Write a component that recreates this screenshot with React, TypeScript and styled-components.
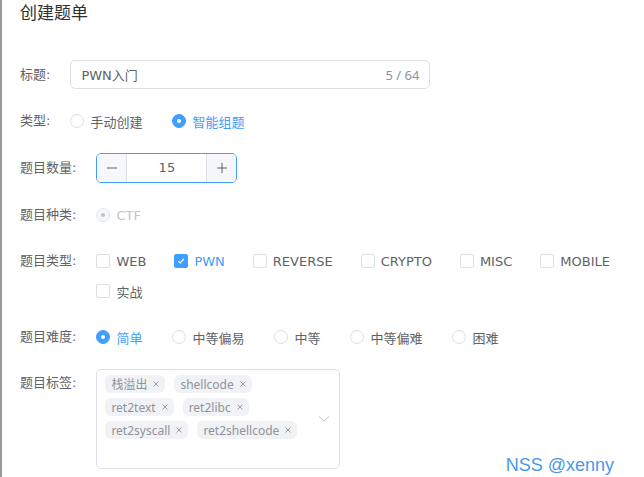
import React from 'react'
import styled, { createGlobalStyle } from 'styled-components'

const blue = '#409eff'
const text = '#606266'
const border = '#dcdfe6'

const GlobalStyle = createGlobalStyle`
  html, body {
    margin: 0;
    padding: 0;
    background: #fff;
  }
  body {
    font-family: "DejaVu Sans", "Noto Sans CJK SC", sans-serif;
  }
  * {
    box-sizing: border-box;
  }
`

const Page = styled.div`
  position: relative;
  width: 644px;
  height: 477px;
  overflow: hidden;
  border-left: 2px solid #9a9a9a;
  padding: 1px 20px 0 18px;
`

const Title = styled.h2`
  margin: 0;
  font-family: "Noto Sans CJK SC", sans-serif;
  font-size: 17px;
  font-weight: 400;
  line-height: 22px;
  color: #303133;
`

const Form = styled.div`
  display: flex;
  flex-direction: column;
  gap: 18px;
  margin-top: 37px;
`

const Item = styled.div<{ $top?: boolean }>`
  display: flex;
  align-items: ${p => (p.$top ? 'flex-start' : 'center')};
`

const Label = styled.label`
  flex: none;
  font-size: 13px;
  line-height: 28px;
  color: ${text};
  padding-right: 20px;
  white-space: nowrap;
`

const Content = styled.div<{ $gap?: number }>`
  flex: 1;
  min-width: 0;
  display: flex;
  flex-wrap: wrap;
  align-items: center;
  row-gap: 2px;
  column-gap: ${p => p.$gap ?? 30}px;
`

/* text input with counter */
const TextInput = styled.div`
  width: 360px;
  height: 29px;
  border: 1px solid ${border};
  border-radius: 5px;
  display: flex;
  align-items: center;
  padding: 0 10px;
  font-size: 13px;
  color: ${text};
`

const InputValue = styled.span`
  flex: 1;
`

const Counter = styled.span`
  font-family: "Noto Sans", sans-serif;
  font-size: 13px;
  color: #909399;
`

/* radio and checkbox share one label style */
const Choice = styled.span<{ $active?: boolean; $disabled?: boolean }>`
  display: inline-flex;
  align-items: center;
  height: 28px;
  font-size: 13px;
  color: ${p => (p.$disabled ? '#c0c4cc' : p.$active ? blue : text)};
`

const RadioDot = styled.span<{ $checked?: boolean; $disabled?: boolean }>`
  position: relative;
  width: 14px;
  height: 14px;
  margin-right: 6px;
  border-radius: 50%;
  border: 1px solid ${p => (p.$disabled ? '#e4e7ed' : p.$checked ? blue : border)};
  background: ${p => (p.$disabled ? '#f5f7fa' : p.$checked ? blue : '#fff')};

  &::after {
    content: '';
    display: ${p => (p.$checked ? 'block' : 'none')};
    position: absolute;
    left: 50%;
    top: 50%;
    width: 4px;
    height: 4px;
    margin: -2px 0 0 -2px;
    border-radius: 50%;
    background: ${p => (p.$disabled ? '#c0c4cc' : '#fff')};
  }
`

const CheckBox = styled.span<{ $checked?: boolean }>`
  display: inline-flex;
  align-items: center;
  justify-content: center;
  width: 14px;
  height: 14px;
  margin-right: 6px;
  border-radius: 2px;
  border: 1px solid ${p => (p.$checked ? blue : border)};
  background: ${p => (p.$checked ? blue : '#fff')};
`

/* number input */
const NumberInput = styled.div`
  display: flex;
  width: 141px;
  height: 30px;
  border: 1px solid ${blue};
  border-radius: 5px;
  overflow: hidden;
`

const StepButton = styled.span<{ $side: 'left' | 'right' }>`
  flex: none;
  width: 30px;
  display: flex;
  align-items: center;
  justify-content: center;
  background: #f5f7fa;
  ${p => (p.$side === 'left' ? `border-right: 1px solid ${border};` : `border-left: 1px solid ${border};`)}
`

const NumberValue = styled.span`
  flex: 1;
  text-align: center;
  line-height: 28px;
  font-size: 13px;
  color: ${text};
`

/* tag select */
const TagSelect = styled.div`
  display: flex;
  width: 244px;
  height: 100px;
  border: 1px solid ${border};
  border-radius: 5px;
`

const TagList = styled.div`
  flex: 1;
  display: flex;
  flex-wrap: wrap;
  align-content: flex-start;
  gap: 5px 9px;
  padding: 5px 0 0 8px;
`

const Tag = styled.span`
  display: inline-flex;
  align-items: center;
  height: 18px;
  padding: 0 6px;
  border-radius: 6px;
  background: #f0f2f5;
  color: #909399;
  font-family: "Noto Sans", "Noto Sans CJK SC", sans-serif;
  font-size: 12px;
`

const TagClose = styled.svg`
  margin-left: 6px;
`

const Arrow = styled.div`
  flex: none;
  width: 30px;
  display: flex;
  align-items: center;
  justify-content: center;
`

const Watermark = styled.div`
  position: absolute;
  right: 30px;
  bottom: 1px;
  font-family: "Liberation Sans", Arial, sans-serif;
  font-size: 18px;
  color: #4a98e8;
`

const Radio: React.FC<{ label: string; checked?: boolean; disabled?: boolean }> = ({ label, checked, disabled }) => (
  <Choice $active={checked} $disabled={disabled}>
    <RadioDot $checked={checked} $disabled={disabled} />
    {label}
  </Choice>
)

const Checkbox: React.FC<{ label: string; checked?: boolean }> = ({ label, checked }) => (
  <Choice $active={checked}>
    <CheckBox $checked={checked}>
      {checked && (
        <svg width="10" height="10" viewBox="0 0 10 10">
          <path d="M2.3 5.2 L4.2 7 L7.8 3" fill="none" stroke="#fff" strokeWidth="1.2" />
        </svg>
      )}
    </CheckBox>
    {label}
  </Choice>
)

const tags = ['栈溢出', 'shellcode', 'ret2text', 'ret2libc', 'ret2syscall', 'ret2shellcode']
const kinds = ['WEB', 'PWN', 'REVERSE', 'CRYPTO', 'MISC', 'MOBILE', '实战']
const levels = ['简单', '中等偏易', '中等', '中等偏难', '困难']

const App: React.FC = () => {
  return (
    <Page>
      <GlobalStyle />
      <Title>创建题单</Title>
      <Form>
        <Item>
          <Label>标题:</Label>
          <Content>
            <TextInput>
              <InputValue>PWN入门</InputValue>
              <Counter>5 / 64</Counter>
            </TextInput>
          </Content>
        </Item>
        <Item>
          <Label>类型:</Label>
          <Content>
            <Radio label="手动创建" />
            <Radio label="智能组题" checked />
          </Content>
        </Item>
        <Item>
          <Label>题目数量:</Label>
          <Content>
            <NumberInput>
              <StepButton $side="left">
                <svg width="12" height="12" viewBox="0 0 12 12">
                  <path d="M1 6 H11" stroke={text} strokeWidth="1" />
                </svg>
              </StepButton>
              <NumberValue>15</NumberValue>
              <StepButton $side="right">
                <svg width="12" height="12" viewBox="0 0 12 12">
                  <path d="M1 6 H11 M6 1 V11" stroke={text} strokeWidth="1" />
                </svg>
              </StepButton>
            </NumberInput>
          </Content>
        </Item>
        <Item>
          <Label>题目种类:</Label>
          <Content>
            <Radio label="CTF" checked disabled />
          </Content>
        </Item>
        <Item $top>
          <Label>题目类型:</Label>
          <Content $gap={28}>
            {kinds.map(k => (
              <Checkbox key={k} label={k} checked={k === 'PWN'} />
            ))}
          </Content>
        </Item>
        <Item>
          <Label>题目难度:</Label>
          <Content>
            {levels.map(l => (
              <Radio key={l} label={l} checked={l === '简单'} />
            ))}
          </Content>
        </Item>
        <Item $top>
          <Label>题目标签:</Label>
          <TagSelect>
            <TagList>
              {tags.map(t => (
                <Tag key={t}>
                  {t}
                  <TagClose width="6" height="6" viewBox="0 0 6 6">
                    <path d="M0.5 0.5 L5.5 5.5 M5.5 0.5 L0.5 5.5" stroke="#909399" strokeWidth="0.9" />
                  </TagClose>
                </Tag>
              ))}
            </TagList>
            <Arrow>
              <svg width="12" height="8" viewBox="0 0 12 8">
                <path d="M1 1.5 L6 6 L11 1.5" fill="none" stroke="#c0c4cc" strokeWidth="1" />
              </svg>
            </Arrow>
          </TagSelect>
        </Item>
      </Form>
      <Watermark>NSS @xenny</Watermark>
    </Page>
  )
}

export default App
